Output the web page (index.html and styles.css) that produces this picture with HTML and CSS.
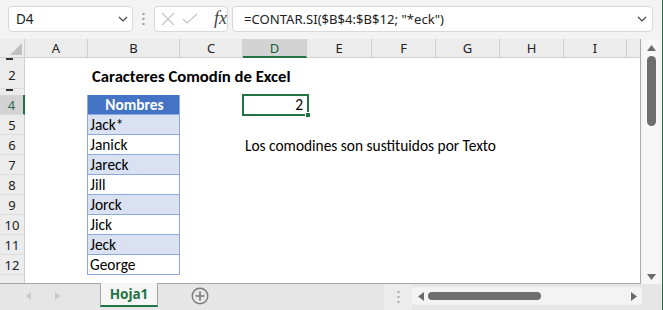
FILE: index.html
```html
<!DOCTYPE html>
<html lang="es">
<head>
<meta charset="UTF-8" />
<title>Caracteres Comodín de Excel</title>
<link rel="stylesheet" href="styles.css">
</head>
<body>
<div class="app">

  <div class="formula-bar">
    <div class="namebox">
      <span>D4</span>
      <svg class="chev" width="10" height="6" viewBox="0 0 10 6"><polyline points="1,1 5,5 9,1" fill="none" stroke="#444" stroke-width="1.2"/></svg>
    </div>
    <div class="grip">
      <svg width="3" height="12" viewBox="0 0 3 12"><rect x="0.5" y="0" width="2" height="2" fill="#999"/><rect x="0.5" y="5" width="2" height="2" fill="#999"/><rect x="0.5" y="10" width="2" height="2" fill="#999"/></svg>
    </div>
    <div class="fxbox">
      <svg width="14" height="14" viewBox="0 0 14 14"><path d="M1 1 L13 13 M13 1 L1 13" stroke="#c4c4c4" stroke-width="1.2"/></svg>
      <svg width="16" height="12" viewBox="0 0 16 12"><polyline points="1,6 5,10 15,1" fill="none" stroke="#c4c4c4" stroke-width="1.2"/></svg>
      <span class="fx">fx</span>
    </div>
    <div class="formula">
      <span>=CONTAR.SI($B$4:$B$12; "*eck")</span>
      <svg class="chev" width="10" height="6" viewBox="0 0 10 6"><polyline points="1,1 5,5 9,1" fill="none" stroke="#444" stroke-width="1.2"/></svg>
    </div>
  </div>

  <div class="workarea">
    <div class="sheet">
      <div class="corner">
        <svg width="12" height="12" viewBox="0 0 12 12"><polygon points="12,0 12,12 0,12" fill="#c0c0c0"/></svg>
      </div>
      <div class="ch">A</div>
      <div class="ch">B</div>
      <div class="ch">C</div>
      <div class="ch sel">D</div>
      <div class="ch">E</div>
      <div class="ch">F</div>
      <div class="ch">G</div>
      <div class="ch">H</div>
      <div class="ch">I</div>
      <div class="ch last"></div>

      <div class="rh hidden"><i></i></div>
      <div class="rh">2</div>
      <div class="rh hidden"><i></i></div>
      <div class="rh sel">4</div>
      <div class="rh">5</div>
      <div class="rh">6</div>
      <div class="rh">7</div>
      <div class="rh">8</div>
      <div class="rh">9</div>
      <div class="rh">10</div>
      <div class="rh">11</div>
      <div class="rh">12</div>
      <div class="rh cut">13</div>

      <div class="cells"></div>

      <div class="title">Caracteres Comodín de Excel</div>

      <div class="names">
        <div class="nm head">Nombres</div>
        <div class="nm band">Jack*</div>
        <div class="nm">Janick</div>
        <div class="nm band">Jareck</div>
        <div class="nm">Jill</div>
        <div class="nm band">Jorck</div>
        <div class="nm">Jick</div>
        <div class="nm band">Jeck</div>
        <div class="nm">George</div>
      </div>

      <div class="active">2<span class="handle"></span></div>

      <div class="note">Los comodines son sustituidos por Texto</div>
    </div>

    <div class="vscroll">
      <div class="vtrack">
        <svg width="9" height="6" viewBox="0 0 9 6"><polygon points="4.5,0 9,6 0,6" fill="#6b6b6b"/></svg>
        <div class="vthumb"></div>
        <div class="grow"></div>
        <svg width="9" height="6" viewBox="0 0 9 6"><polygon points="0,0 9,0 4.5,6" fill="#6b6b6b"/></svg>
      </div>
    </div>
  </div>

  <div class="tabbar">
    <div class="tabnav">
      <svg width="5" height="8" viewBox="0 0 5 8"><polygon points="5,0 5,8 0,4" fill="#c8c8c8"/></svg>
      <svg width="5" height="8" viewBox="0 0 5 8"><polygon points="0,0 0,8 5,4" fill="#c8c8c8"/></svg>
    </div>
    <div class="tab">Hoja1</div>
    <div class="addsheet">
      <svg width="18" height="18" viewBox="0 0 18 18"><circle cx="9" cy="9" r="7.8" fill="none" stroke="#7a7a7a" stroke-width="1.4"/><path d="M9 4.5 V13.5 M4.5 9 H13.5" stroke="#7a7a7a" stroke-width="1.6"/></svg>
    </div>
    <div class="spacer"></div>
    <div class="hgrip">
      <svg width="3" height="12" viewBox="0 0 3 12"><rect x="0.5" y="0" width="2" height="2" fill="#a8a8a8"/><rect x="0.5" y="5" width="2" height="2" fill="#a8a8a8"/><rect x="0.5" y="10" width="2" height="2" fill="#a8a8a8"/></svg>
    </div>
    <div class="htrack">
      <svg width="6" height="9" viewBox="0 0 6 9"><polygon points="6,0 6,9 0,4.5" fill="#6b6b6b"/></svg>
      <div class="hthumb"></div>
      <div class="grow"></div>
      <svg width="6" height="9" viewBox="0 0 6 9"><polygon points="0,0 0,9 6,4.5" fill="#6b6b6b"/></svg>
    </div>
  </div>

</div>
</body>
</html>
```

FILE: styles.css
```css
/* Reset & base */
* {
  box-sizing: border-box;
}
body {
  margin: 0;
  width: 663px;
  height: 310px;
  overflow: hidden;
  background: #f3f3f3;
  font-family: "Noto Sans", "Liberation Sans", sans-serif;
  color: #222;
}
.app {
  height: 310px;
  display: flex;
  flex-direction: column;
  border-right: 1px solid #217346;
}

/* formula bar */
.formula-bar {
  height: 39px;
  flex: none;
  display: flex;
  padding: 6px 0 0 8px;
}
.namebox {
  width: 125px;
  height: 26px;
  background: #fff;
  border: 1px solid #d8d8d8;
  border-radius: 4px;
  display: flex;
  align-items: center;
  justify-content: space-between;
  padding: 0 4px 0 7px;
  font-size: 13.5px;
}
.grip {
  width: 21px;
  height: 26px;
  display: flex;
  align-items: center;
  justify-content: center;
}
.fxbox {
  width: 74px;
  height: 26px;
  background: #fff;
  border: 1px solid #d8d8d8;
  border-radius: 4px;
  display: flex;
  align-items: center;
  padding-left: 6px;
  gap: 7px;
}
.fx {
  font-family: "Liberation Serif", serif;
  font-style: italic;
  font-size: 18px;
  color: #444;
  margin-left: 9px;
  margin-top: -2px;
}
.formula {
  width: 421px;
  height: 26px;
  margin-left: 4px;
  background: #fff;
  border: 1px solid #d8d8d8;
  border-radius: 4px;
  display: flex;
  align-items: center;
  justify-content: space-between;
  padding: 0 5px 0 11px;
  font-size: 13.1px;
}

/* sheet */
.workarea {
  height: 245px;
  flex: none;
  display: flex;
}
.sheet {
  width: 641px;
  display: grid;
  grid-template-columns: 25px 63px 92px 63px 64px 65px 64px 64px 64px 63px 13px;
  grid-template-rows: 19px 4px 27px 6px repeat(9, 20px) 1fr;
  border-right: 1px solid #ababab;
  border-bottom: 1px solid #a6a6a6;
  font-family: "Carlito", "Lato", sans-serif;
  font-size: 15.4px;
  color: #000;
}
.corner {
  background: #ececec;
  border-right: 1px solid #d0d0d0;
  border-bottom: 1px solid #cfcfcf;
  display: flex;
  align-items: flex-end;
  justify-content: flex-end;
  padding: 0 2px 2px 0;
}
.ch {
  background: #ececec;
  border-right: 1px solid #d0d0d0;
  border-bottom: 1px solid #cfcfcf;
  font-family: "Noto Sans", sans-serif;
  font-size: 13px;
  color: #222;
  display: flex;
  align-items: center;
  justify-content: center;
}
.ch.last {
  border-right: none;
}
.ch.sel {
  background: #d3d3d3;
  border-bottom: 2px solid #217346;
  color: #1d5b38;
}
.rh {
  grid-column: 1;
  background: #ececec;
  border-right: 1px solid #cfcfcf;
  border-bottom: 1px solid #dcdcdc;
  font-family: "Noto Sans", sans-serif;
  font-size: 13px;
  color: #222;
  display: flex;
  align-items: center;
  justify-content: center;
  overflow: hidden;
}
.rh.sel {
  background: #d3d3d3;
  border-right: 2px solid #217346;
  color: #2f6b49;
}
.rh.hidden {
  border-bottom: none;
  align-items: flex-start;
}
.rh.hidden i {
  display: block;
  width: 7px;
  height: 2px;
  margin-right: 6px;
  background: #333;
}
.rh.cut {
  align-items: flex-start;
  padding-top: 3px;
  border-bottom: none;
}
.cells {
  grid-column: 2 / -1;
  grid-row: 2 / -1;
  background: #fff;
}
.title {
  grid-column: 3 / span 4;
  grid-row: 3;
  align-self: end;
  padding: 0 0 3px 4px;
  font-weight: 700;
  font-size: 16.7px;
  white-space: nowrap;
}
.names {
  grid-column: 3;
  grid-row: 5 / span 9;
  border-left: 1px solid #8ea9db;
  border-right: 1px solid #8ea9db;
  margin-left: -1px;
  display: flex;
  flex-direction: column;
}
.nm {
  height: 20px;
  flex: none;
  border-bottom: 1px solid #8ea9db;
  padding-left: 2px;
  line-height: 20px;
  background: #fff;
}
.nm.band {
  background: #d9e1f2;
}
.nm.head {
  background: #4472c4;
  color: #fff;
  font-weight: 700;
  text-align: center;
}
.active {
  grid-column: 5;
  grid-row: 5;
  margin: -1px -2px -1px -1px;
  border: 2px solid #217346;
  text-align: right;
  padding-right: 4px;
  line-height: 18px;
  position: relative;
}
.handle {
  position: absolute;
  right: -4px;
  bottom: -4px;
  width: 6px;
  height: 6px;
  background: #217346;
  border: 1px solid #fff;
}
.note {
  grid-column: 5 / span 5;
  grid-row: 7;
  padding-left: 2px;
  line-height: 21px;
  white-space: nowrap;
}

/* vertical scrollbar */
.vscroll {
  width: 21px;
  padding: 1px 3px 0 2px;
}
.vtrack {
  height: 244px;
  background: #f7f7f7;
  border-radius: 4px;
  display: flex;
  flex-direction: column;
  align-items: center;
  padding: 5px 0 4px;
}
.vthumb {
  width: 9px;
  height: 70px;
  margin-top: 5px;
  background: #6e6e6e;
  border-radius: 5px;
}
.grow {
  flex: 1;
}

/* sheet tabs */
.tabbar {
  flex: 1;
  display: flex;
  background: #e6e6e6;
}
.tabnav {
  width: 100px;
  display: flex;
  align-items: center;
  padding: 0 0 2px 26px;
  gap: 24px;
}
.tab {
  width: 58px;
  margin-top: -1px;
  background: #f6f6f6;
  border-left: 1px solid #a6a6a6;
  border-right: 1px solid #a6a6a6;
  border-bottom: 2px solid #217346;
  color: #217346;
  font-weight: 700;
  font-size: 13.5px;
  text-align: center;
  line-height: 22px;
  margin-bottom: 3px;
}
.addsheet {
  width: 84px;
  display: flex;
  align-items: center;
  justify-content: center;
  padding-bottom: 2px;
}
.spacer {
  flex: 1;
}
.hgrip {
  width: 28px;
  background: #ececec;
  display: flex;
  align-items: center;
  justify-content: center;
}
.htrack {
  width: 230px;
  height: 18px;
  margin: 3px 20px 0 0;
  background: #f3f3f3;
  border-radius: 4px;
  display: flex;
  align-items: center;
  padding: 0 5px 0 6px;
}
.hthumb {
  width: 113px;
  height: 8px;
  margin-left: 4px;
  background: #6e6e6e;
  border-radius: 4px;
}
```
